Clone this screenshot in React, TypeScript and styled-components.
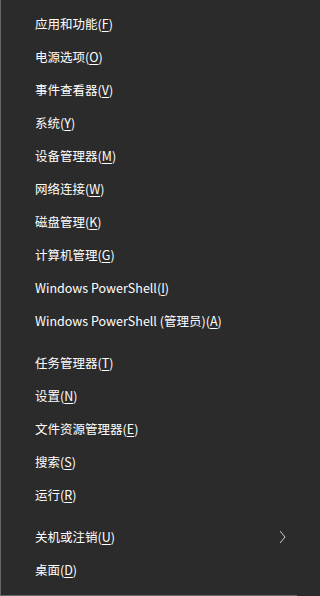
import React from 'react';
import styled, { createGlobalStyle } from 'styled-components';

type Entry =
  | { kind: 'item'; label: string; key: string; submenu?: boolean }
  | { kind: 'sep' };

const entries: Entry[] = [
  { kind: 'item', label: '应用和功能', key: 'F' },
  { kind: 'item', label: '电源选项', key: 'O' },
  { kind: 'item', label: '事件查看器', key: 'V' },
  { kind: 'item', label: '系统', key: 'Y' },
  { kind: 'item', label: '设备管理器', key: 'M' },
  { kind: 'item', label: '网络连接', key: 'W' },
  { kind: 'item', label: '磁盘管理', key: 'K' },
  { kind: 'item', label: '计算机管理', key: 'G' },
  { kind: 'item', label: 'Windows PowerShell', key: 'I' },
  { kind: 'item', label: 'Windows PowerShell (管理员)', key: 'A' },
  { kind: 'sep' },
  { kind: 'item', label: '任务管理器', key: 'T' },
  { kind: 'item', label: '设置', key: 'N' },
  { kind: 'item', label: '文件资源管理器', key: 'E' },
  { kind: 'item', label: '搜索', key: 'S' },
  { kind: 'item', label: '运行', key: 'R' },
  { kind: 'sep' },
  { kind: 'item', label: '关机或注销', key: 'U', submenu: true },
  { kind: 'item', label: '桌面', key: 'D' },
];

const GlobalStyle = createGlobalStyle`
  html, body {
    margin: 0;
    padding: 0;
    background: #2b2b2b;
  }
  * {
    box-sizing: border-box;
  }
`;

export default function App() {
  return (
    <>
      <GlobalStyle />
      <Menu>
        {entries.map((e, i) =>
          e.kind === 'sep' ? (
            <Separator key={i} />
          ) : (
            <MenuItem key={i}>
              <Label>
                {e.label}(<Mnemonic>{e.key}</Mnemonic>)
              </Label>
              {e.submenu && (
                <Chevron viewBox="0 0 7 14" width="7" height="14">
                  <path d="M1 1 L6 7 L1 13" fill="none" stroke="#cfcfcf" strokeWidth="1" />
                </Chevron>
              )}
            </MenuItem>
          )
        )}
      </Menu>
    </>
  );
}

const Menu = styled.div`
  width: 297px;
  height: 596px;
  background: #2b2b2b;
  border-left: 1px solid #62676b;
  border-bottom: 1px solid #62676b;
  padding: 7px 0 9px;
  display: flex;
  flex-direction: column;
  font-family: 'Noto Sans CJK SC', 'Noto Sans', sans-serif;
`;

const MenuItem = styled.div`
  height: 33px;
  display: flex;
  align-items: center;
  justify-content: space-between;
  padding: 0 11px 0 34px;
  color: #ffffff;
  font-size: 12.5px;
  cursor: default;
  user-select: none;
  :hover {
    background: #ffffff11;
  }
`;

const Label = styled.span`
  white-space: nowrap;
`;

const Mnemonic = styled.span`
  text-decoration: underline;
  text-underline-offset: 2px;
`;

const Chevron = styled.svg`
  display: block;
`;

const Separator = styled.div`
  height: 9px;
  display: flex;
  align-items: center;
  padding: 0 10px 0 11px;
  ::after {
    content: '';
    flex: 1;
    height: 1px;
    background: #6e6e6e;
  }
`;
